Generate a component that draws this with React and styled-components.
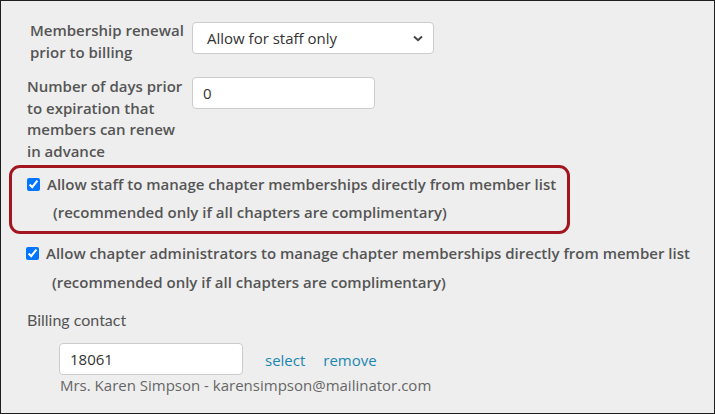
import styled, { createGlobalStyle } from "styled-components";

const GlobalStyle = createGlobalStyle`
  html, body {
    margin: 0;
    padding: 0;
    background: #eeeeee;
  }
  * {
    box-sizing: border-box;
  }
`;

const Frame = styled.div`
  width: 715px;
  height: 414px;
  border: 1px solid #1e1e1e;
  background: #eeeeee;
  font-family: "Open Sans", "Noto Sans", sans-serif;
  color: #555;
  overflow: hidden;
  padding: 21px 0 0 0;
`;

const FieldRow = styled.div`
  display: flex;
  align-items: flex-start;
  padding-left: ${(props) => props.indent}px;
  margin-bottom: ${(props) => props.gap}px;
`;

const FieldLabel = styled.label`
  width: ${(props) => props.width}px;
  flex-shrink: 0;
  padding-right: 6px;
  font-size: 15px;
  font-weight: 600;
  line-height: 21.5px;
  margin-top: ${(props) => props.top}px;
`;

const Select = styled.div`
  width: 242px;
  height: 32px;
  background: #fff;
  border: 1px solid #ccc;
  border-radius: 4px;
  display: flex;
  align-items: center;
  justify-content: space-between;
  padding: 0 10px 0 14px;
  font-size: 15px;
  color: #333;
`;

const TextInput = styled.div`
  width: ${(props) => props.width}px;
  height: 32px;
  background: #fff;
  border: 1px solid #ccc;
  border-radius: 4px;
  display: flex;
  align-items: center;
  padding-left: 10px;
  font-size: 15px;
  color: #333;
`;

const Highlight = styled.div`
  margin: 0 0 0 8px;
  width: 561px;
  height: 69px;
  border: 3px solid #a3161f;
  border-radius: 11px;
  padding: 6px 0 0 15px;
`;

const CheckGroup = styled.div`
  padding: 9px 0 0 25px;
`;

const CheckLine = styled.label`
  display: flex;
  align-items: center;
  gap: 7px;
  font-size: 15px;
  font-weight: 600;
  line-height: 21px;
`;

const Box = styled.input`
  width: 13px;
  height: 13px;
  margin: 0;
  accent-color: #0075ff;
`;

const Note = styled.div`
  font-size: 15px;
  font-weight: 600;
  line-height: 21px;
  padding: ${(props) => props.top}px 0 0 26px;
`;

const SectionTitle = styled.div`
  font-family: "Lato", "Noto Sans", sans-serif;
  font-size: 16px;
  line-height: 22px;
  color: #555;
  padding: 16px 0 0 26px;
`;

const ContactRow = styled.div`
  display: flex;
  align-items: center;
  gap: 22px;
  padding: 12px 0 0 58px;
`;

const Links = styled.div`
  display: flex;
  gap: 18px;
  font-size: 15px;
  color: #1b86b0;
  padding-top: 1px;
`;

const ContactInfo = styled.div`
  font-size: 15px;
  line-height: 20px;
  color: #666;
  padding: 0 0 0 59px;
`;

const Chevron = () => (
  <svg width="10" height="7" viewBox="0 0 10 7">
    <path d="M1 1.5 L5 5.2 L9 1.5" fill="none" stroke="#444" strokeWidth="2" />
  </svg>
);

const App = () => {
  return (
    <>
      <GlobalStyle />
      <Frame>
        <FieldRow indent={29} gap={14}>
          <FieldLabel width={162} top={-2}>
            Membership renewal prior to billing
          </FieldLabel>
          <Select>
            <span>Allow for staff only</span>
            <Chevron />
          </Select>
        </FieldRow>
        <FieldRow indent={26} gap={3}>
          <FieldLabel width={165} top={-1}>
            Number of days prior to expiration that members can renew in advance
          </FieldLabel>
          <TextInput width={183}>0</TextInput>
        </FieldRow>
        <Highlight>
          <CheckLine>
            <Box type="checkbox" defaultChecked />
            Allow staff to manage chapter memberships directly from member list
          </CheckLine>
          <Note top={7}>(recommended only if all chapters are complimentary)</Note>
        </Highlight>
        <CheckGroup>
          <CheckLine>
            <Box type="checkbox" defaultChecked />
            Allow chapter administrators to manage chapter memberships directly from member list
          </CheckLine>
          <Note top={8}>(recommended only if all chapters are complimentary)</Note>
        </CheckGroup>
        <SectionTitle>Billing contact</SectionTitle>
        <ContactRow>
          <TextInput width={184}>18061</TextInput>
          <Links>
            <span>select</span>
            <span>remove</span>
          </Links>
        </ContactRow>
        <ContactInfo>Mrs. Karen Simpson - karensimpson@mailinator.com</ContactInfo>
      </Frame>
    </>
  );
};

export default App;
